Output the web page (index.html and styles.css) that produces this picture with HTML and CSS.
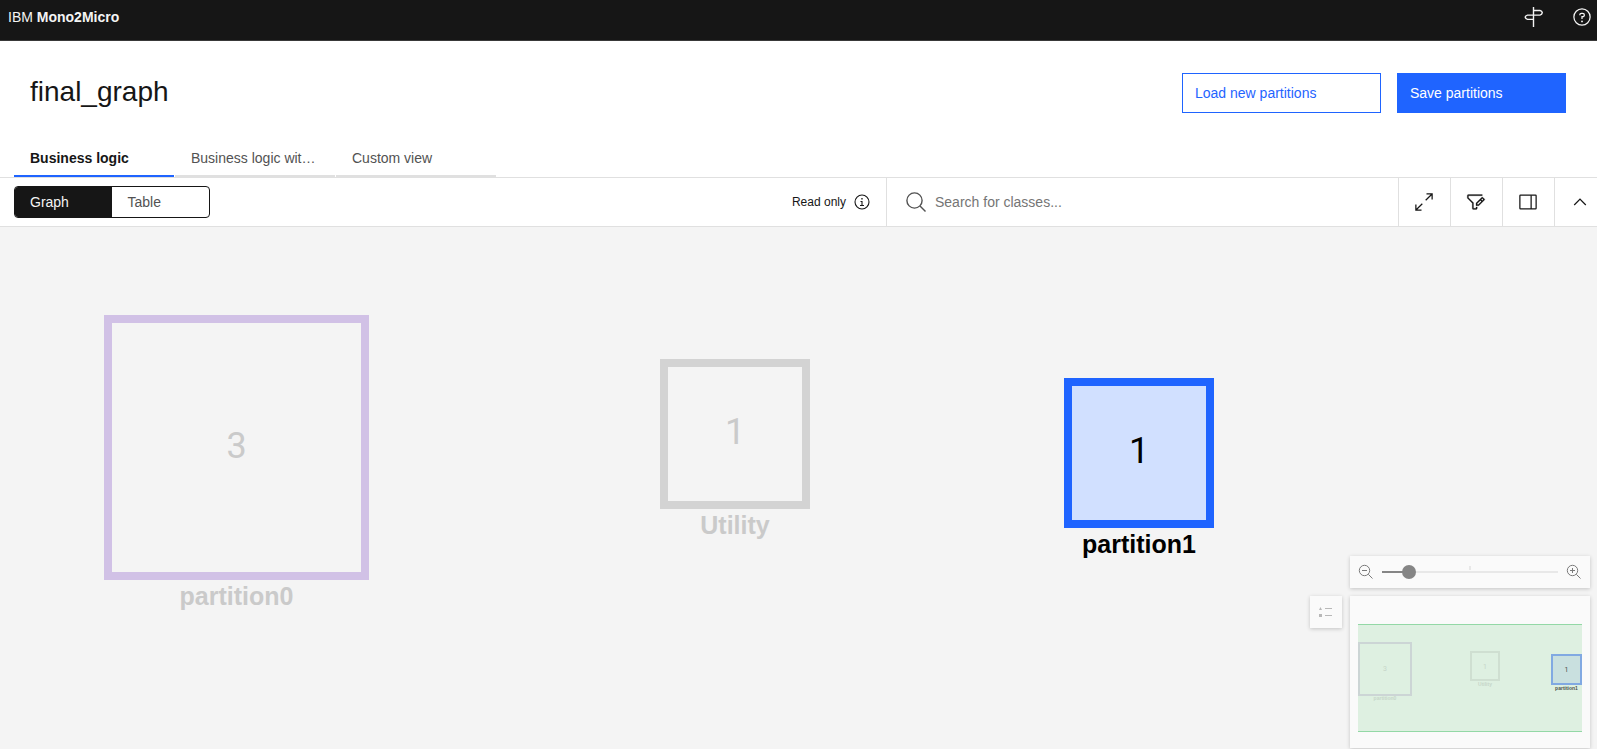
FILE: index.html
```html
<!DOCTYPE html>
<html lang="en">
<head>
<meta charset="utf-8">
<meta name="viewport" content="width=device-width, initial-scale=1">
<title>IBM Mono2Micro</title>
<link rel="stylesheet" href="styles.css">
</head>
<body>
<header class="topbar">
  <a class="brand" href="#">IBM <b>Mono2Micro</b></a>
  <div class="topbar-actions">
    <button class="icon-button" type="button" aria-label="Tour">
      <svg class="icon-m" viewBox="0 0 20 20" fill="none" stroke="currentColor" stroke-width="1.400"><path d="M9.500 0v20M9.500 3.500h6.500q2 .3 2.300 2.200Q18 7.700 16 8.100H3.500Q1.500 8.500 1.200 10.200 1.500 12 3.500 12.400h6"/></svg>
    </button>
    <button class="icon-button" type="button" aria-label="Help">
      <svg class="icon-m" viewBox="0 0 32 32" fill="none" stroke="currentColor" stroke-width="2"><circle cx="16" cy="16" r="13"/><path d="M12.500 13v-.5A2.500 2.500 0 0 1 15 10h2a2.750 2.750 0 0 1 0 5.500h-1V19"/><circle cx="16" cy="23" r="1.500" fill="currentColor" stroke="none"/></svg>
    </button>
  </div>
</header>

<section class="page-head">
  <h1 class="title">final_graph</h1>
  <div class="actions">
    <button class="btn btn-outline" type="button">Load new partitions</button>
    <button class="btn btn-primary" type="button">Save partitions</button>
  </div>
</section>

<nav class="tabs" role="tablist">
  <button class="tab tab-active" type="button" role="tab" aria-selected="true">Business logic</button>
  <button class="tab" type="button" role="tab" aria-selected="false">Business logic wit…</button>
  <button class="tab" type="button" role="tab" aria-selected="false">Custom view</button>
</nav>

<section class="toolbar">
  <div class="switcher">
    <button class="switch switch-on" type="button">Graph</button>
    <button class="switch" type="button">Table</button>
  </div>
  <div class="read-only">
    <span>Read only</span>
    <svg class="icon-s" viewBox="0 0 32 32" fill="none" stroke="currentColor" stroke-width="2.200"><circle cx="16" cy="16" r="14"/><path d="M13 15h3v8M12 23h8"/><circle cx="16" cy="9.500" r="1.700" fill="currentColor" stroke="none"/></svg>
  </div>
  <label class="search">
    <svg class="icon-m" viewBox="0 0 20 20" fill="none" stroke="currentColor" stroke-width="1.400"><circle cx="8.500" cy="8.500" r="7.600"/><path d="M14 14l5.500 5.500"/></svg>
    <input class="search-input" type="text" placeholder="Search for classes..." aria-label="Search for classes">
  </label>
  <button class="tool" type="button" aria-label="Maximize">
    <svg class="icon-m" viewBox="0 0 32 32" fill="currentColor"><path d="M20 2v2h6.586L18 12.582 19.414 14 28 5.414V12h2V2zM14 19.416 12.592 18 4 26.586V20H2v10h10v-2H5.414z"/></svg>
  </button>
  <button class="tool" type="button" aria-label="Edit filter">
    <svg class="icon-m" viewBox="0 0 32 32" fill="currentColor" stroke="currentColor" stroke-width=".4"><path d="M26 6H4v3.171l7.414 7.414.586.586V26h4v-2h2v2a2 2 0 0 1-2 2h-4a2 2 0 0 1-2-2v-8l-7.414-7.415A2 2 0 0 1 2 9.171V6a2 2 0 0 1 2-2h22z"/><path d="M29.710 11.290l-3-3a1 1 0 0 0-1.420 0L16 17.590V22h4.410l9.300-9.290a1 1 0 0 0 0-1.420zM19.590 20H18v-1.590l5-5L24.590 15zM26 13.590 24.410 12 26 10.410 27.590 12z"/></svg>
  </button>
  <button class="tool" type="button" aria-label="Side panel">
    <svg class="icon-m" viewBox="0 0 32 32" fill="none" stroke="currentColor" stroke-width="2"><rect x="3" y="5" width="26" height="22" rx="1"/><path d="M21 5v22"/></svg>
  </button>
  <button class="tool tool-last" type="button" aria-label="Collapse">
    <svg class="icon-m" viewBox="0 0 16 16" fill="currentColor"><path d="M8 5l5 5-.7.7L8 6.400 3.700 10.700 3 10z"/></svg>
  </button>
</section>

<main class="canvas">
  <div class="node node-p0"><div class="box">3</div><div class="label">partition0</div></div>
  <div class="node node-utility"><div class="box">1</div><div class="label">Utility</div></div>
  <div class="node node-p1"><div class="box">1</div><div class="label">partition1</div></div>

  <div class="controls">
    <div class="panel zoom">
      <button class="icon-button" type="button" aria-label="Zoom out">
        <svg class="icon-s" viewBox="0 0 16 16" fill="none" stroke="currentColor"><circle cx="6.500" cy="6.500" r="5.200"/><path d="M10.300 10.300l4.200 4.200M4 6.500h5"/></svg>
      </button>
      <div class="range">
        <input class="slider" type="range" min="0" max="162" value="20" aria-label="Zoom">
        <span class="tick"></span>
      </div>
      <button class="icon-button" type="button" aria-label="Zoom in">
        <svg class="icon-s" viewBox="0 0 16 16" fill="none" stroke="currentColor"><circle cx="6.500" cy="6.500" r="5.200"/><path d="M10.300 10.300l4.200 4.200M4 6.500h5M6.500 4v5"/></svg>
      </button>
    </div>
    <button class="panel legend" type="button" aria-label="Legend">
      <svg class="icon-s" viewBox="0 0 16 16" fill="currentColor"><path d="M2.500 3L4 6H1zM1 10h3v3H1zM7 4h7v1H7zM7 11h7v1H7z"/></svg>
    </button>
    <div class="panel minimap">
      <svg class="map" viewBox="0 1 224 106">
        <g fill="none" stroke-width="2">
          <rect x="1" y="19" width="52" height="52" stroke="#ccd5d5"/>
          <rect x="113" y="28" width="28" height="28" stroke="#cfdfd1"/>
        </g>
        <rect x="194" y="31" width="29" height="29" fill="#c9e0df" stroke="#81a9e2" stroke-width="2"/>
        <g class="map-text">
          <text class="map-num" x="27" y="47">3</text>
          <text class="map-name" x="27" y="76">partition0</text>
          <text class="map-num" x="127" y="45">1</text>
          <text class="map-name" x="127" y="62">Utility</text>
        </g>
        <g class="map-text map-text-on">
          <text class="map-num" x="208.500" y="48">1</text>
          <text class="map-name" x="208.500" y="66">partition1</text>
        </g>
      </svg>
    </div>
  </div>
</main>
</body>
</html>
```
FILE: styles.css
```css
* { box-sizing: border-box; }

body {
  margin: 0;
  min-height: 100vh;
  display: flex;
  flex-direction: column;
  font: 14px/18px "Liberation Sans", Arial, sans-serif;
  color: #161616;
  background: #fff;
}

button {
  font: inherit;
  color: inherit;
  border: 0;
  border-radius: 0;
  padding: 0;
  background: none;
  text-align: left;
  cursor: pointer;
}

svg { display: block; flex: none; }
.icon-s { width: 16px; height: 16px; }
.icon-m { width: 20px; height: 20px; }

.topbar {
  display: flex;
  justify-content: space-between;
  align-items: flex-start;
  height: 41px;
  padding: 7px 5px 0 8px;
  background: #161616;
  border-bottom: 1px solid #393939;
  color: #f4f4f4;
}
.brand { color: inherit; text-decoration: none; line-height: 20px; }
.topbar-actions { display: flex; gap: 28px; }

.page-head {
  display: flex;
  justify-content: space-between;
  align-items: flex-start;
  padding: 32px 31px 24px 30px;
}
.title { margin: 0; font-size: 28px; line-height: 38px; font-weight: 400; }
.actions { display: flex; gap: 16px; }
.btn { height: 40px; padding: 0 12px; border: 1px solid #1f64ff; }
.btn-outline { width: 199px; color: #1f64ff; }
.btn-primary { width: 169px; color: #fff; background: #1f64ff; }

.tabs {
  display: flex;
  gap: 1px;
  padding-left: 14px;
  border-bottom: 1px solid #e0e0e0;
}
.tab {
  width: 160px;
  height: 40px;
  padding: 4px 16px 0;
  border-bottom: 2px solid #e0e0e0;
  color: #525252;
  white-space: nowrap;
}
.tab-active { border-color: #1f64ff; color: #161616; font-weight: 700; }

.toolbar {
  display: flex;
  height: 49px;
  border-bottom: 1px solid #e0e0e0;
}
.switcher {
  display: flex;
  align-self: center;
  width: 196px;
  height: 32px;
  margin-left: 14px;
  border: 1px solid #161616;
  border-radius: 4px;
  overflow: hidden;
}
.switch { flex: 1; padding-left: 16px; color: #525252; }
.switch-on { padding-left: 15px; background: #161616; color: #f4f4f4; }
.read-only {
  display: flex;
  align-items: center;
  gap: 8px;
  margin-left: auto;
  padding-right: 16px;
  font-size: 12px;
}
.search {
  display: flex;
  align-items: center;
  gap: 9px;
  width: 512px;
  padding-left: 19px;
  border-left: 1px solid #e0e0e0;
  color: #525252;
}
.search-input {
  flex: 1;
  padding: 0;
  border: 0;
  outline: 0;
  font: inherit;
  color: #161616;
}
.search-input::placeholder { color: #757575; opacity: 1; }
.tool { width: 52px; padding-left: 15px; border-left: 1px solid #e0e0e0; }
.tool-last { width: 43px; }

.canvas {
  position: relative;
  flex: 1;
  min-height: 522px;
  overflow: hidden;
  background: #f4f4f4;
}

.node {
  position: absolute;
  display: flex;
  flex-direction: column;
  align-items: center;
  color: #cacaca;
}
.node-p0 { left: 104px; top: 88px; }
.node-utility { left: 660px; top: 132px; }
.node-p1 { left: 1064px; top: 151px; color: #000; }
.box {
  display: flex;
  align-items: center;
  justify-content: center;
  width: 150px;
  height: 150px;
  padding-bottom: 4px;
  border: 8px solid #d3d3d3;
  font-family: Roboto, "Liberation Sans", sans-serif;
  font-size: 36px;
  line-height: 40px;
}
.node-p0 .box { width: 265px; height: 265px; border-color: #d1c1e6; }
.node-p1 .box { background: #d1e0ff; border-color: #1f64ff; }
.label { font-size: 25px; line-height: 32px; font-weight: 700; }

.controls {
  position: absolute;
  right: 7px;
  bottom: 1px;
  display: grid;
  grid-template-columns: 32px 240px;
  gap: 8px;
  align-items: start;
}
.panel { background: #fafafa; box-shadow: 0 1px 4px rgba(0, 0, 0, 0.2); }
.zoom {
  grid-column: 2;
  display: flex;
  align-items: center;
  justify-content: space-between;
  height: 32px;
  padding: 0 8px;
  color: #7a7a7a;
}
.range { position: relative; display: flex; width: 176px; }
.slider {
  appearance: none;
  width: 100%;
  height: 14px;
  margin: 0;
  background: linear-gradient(90deg, #858585 27px, #e8e8e8 27px) center / 100% 2px no-repeat;
}
.slider::-webkit-slider-thumb {
  appearance: none;
  width: 14px;
  height: 14px;
  border-radius: 50%;
  background: #858585;
}
.tick {
  position: absolute;
  left: 50%;
  top: 1px;
  width: 2px;
  height: 4px;
  margin-left: -1px;
  background: #e8e8e8;
}
.legend {
  grid-column: 1;
  display: flex;
  align-items: center;
  justify-content: center;
  height: 32px;
  color: #b8b8b8;
}
.minimap { height: 152px; padding: 28px 8px 16px; }
.map {
  width: 100%;
  height: 108px;
  background: #def0e1;
  border-top: 1px solid #93d8a6;
  border-bottom: 1px solid #93d8a6;
}
.map-text { fill: #c6d6c9; text-anchor: middle; }
.map-text-on { fill: #4c524d; }
.map-num { font-family: Roboto, "Liberation Sans", sans-serif; font-size: 7px; }
.map-name { font-size: 5px; font-weight: 700; }
```
